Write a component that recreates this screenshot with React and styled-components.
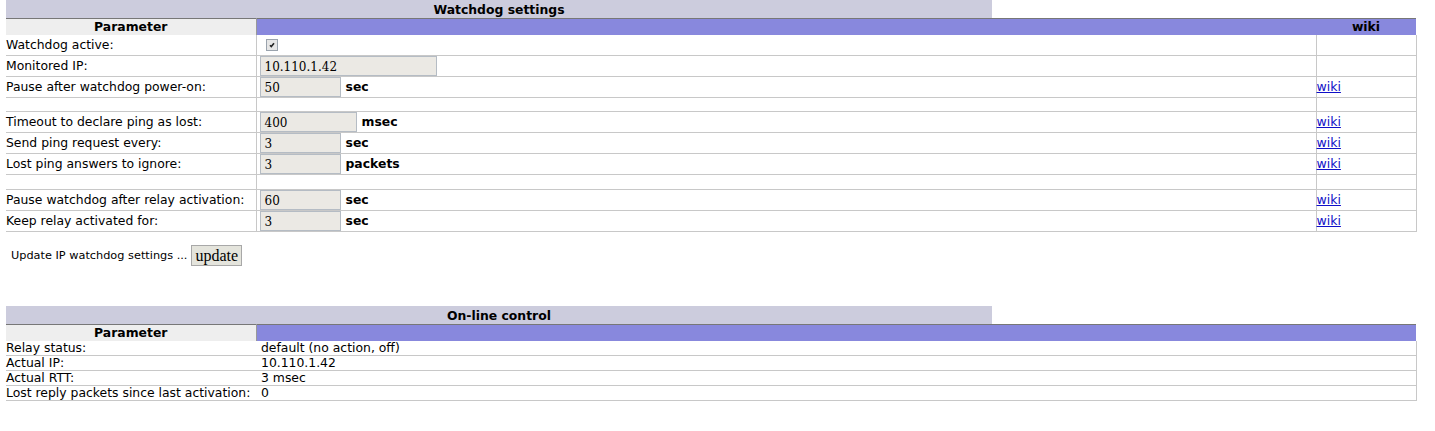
import React from 'react';
import styled, { createGlobalStyle } from 'styled-components';

const GlobalStyle = createGlobalStyle`
  body {
    margin: 0;
    padding: 0 6px;
    background: #fff;
    font-family: "DejaVu Sans", Verdana, sans-serif;
    font-size: 12.4px;
    line-height: 14px;
    color: #000;
  }
`;

const Section = styled.section`
  margin-top: ${p => p.top || 0}px;
`;

const Title = styled.div`
  width: 986px;
  height: 18px;
  line-height: 19px;
  background: #ccccdd;
  text-align: center;
  font-weight: bold;
`;

const Table = styled.table`
  width: 1410px;
  border-collapse: collapse;
  border-spacing: 0;
  border-top: 1px solid #777;
  table-layout: fixed;
`;

const HeadCell = styled.th`
  height: 15px;
  padding: 0;
  line-height: 16px;
  font-weight: bold;
  text-align: center;
  background: ${p => (p.light ? '#eeeeee' : '#8888dd')};
  border-right: ${p => (p.light ? '1px solid #999' : 'none')};
`;

const Row = styled.tr`
  border-bottom: 1px solid #c8c8c8;
`;

const Cell = styled.td`
  height: ${p => p.h}px;
  padding: 0 0 0 ${p => (p.pad == null ? 0 : p.pad)}px;
  vertical-align: middle;
  white-space: nowrap;
  border-right: ${p => (p.line ? '1px solid #c8c8c8' : 'none')};
`;

const Field = styled.div`
  display: flex;
  align-items: center;
  gap: 5px;
`;

const TextBox = styled.div`
  box-sizing: border-box;
  width: ${p => p.w}px;
  height: 20px;
  padding: 3px 0 0 4px;
  background: #ebe9e4;
  border: 1px solid #b5bcc4;
  font-family: "DejaVu Serif", "Liberation Serif", serif;
  font-size: 12px;
`;

const Unit = styled.span`
  font-weight: bold;
`;

const Check = styled.span`
  display: inline-block;
  box-sizing: border-box;
  width: 12px;
  height: 12px;
  margin-left: 6px;
  margin-top: 2px;
  background: #e6e6e6;
  border: 1px solid #9aa3ad;
  line-height: 0;
`;

const Wiki = styled.a`
  color: #1010c8;
  text-decoration: underline;
  font-size: 12.5px;
`;

const UpdateBar = styled.div`
  display: flex;
  align-items: center;
  gap: 4px;
  margin: 13px 0 0 5px;
  font-size: 11.3px;
`;

const Button = styled.button`
  height: 21px;
  padding: 0 3px;
  background: #e4e4dc;
  border: 1px solid #a8a8a8;
  font-family: "Liberation Serif", serif;
  font-size: 16px;
  color: #000;
`;

const settings = [
  { label: 'Watchdog active:', check: true },
  { label: 'Monitored IP:', value: '10.110.1.42', w: 177 },
  { label: 'Pause after watchdog power-on:', value: '50', w: 81, unit: 'sec', wiki: true },
  { spacer: 13 },
  { label: 'Timeout to declare ping as lost:', value: '400', w: 97, unit: 'msec', wiki: true },
  { label: 'Send ping request every:', value: '3', w: 81, unit: 'sec', wiki: true },
  { label: 'Lost ping answers to ignore:', value: '3', w: 81, unit: 'packets', wiki: true },
  { spacer: 14 },
  { label: 'Pause watchdog after relay activation:', value: '60', w: 81, unit: 'sec', wiki: true },
  { label: 'Keep relay activated for:', value: '3', w: 81, unit: 'sec', wiki: true },
];

const online = [
  ['Relay status:', 'default (no action, off)'],
  ['Actual IP:', '10.110.1.42'],
  ['Actual RTT:', '3 msec'],
  ['Lost reply packets since last activation:', '0'],
];

function CheckMark() {
  return (
    <Check>
      <svg width="10" height="10" viewBox="0 0 10 10">
        <path d="M3 5.2 L4.3 6.6 L7 3.2" fill="none" stroke="#222" strokeWidth="1.6" />
      </svg>
    </Check>
  );
}

function SettingsRow({ item }) {
  if (item.spacer) {
    return (
      <Row>
        <Cell h={item.spacer} line />
        <Cell h={item.spacer} line />
        <Cell h={item.spacer} line />
      </Row>
    );
  }
  return (
    <Row>
      <Cell h={20} pad={0} line>{item.label}</Cell>
      <Cell h={20} pad={3} line>
        {item.check ? (
          <CheckMark />
        ) : (
          <Field>
            <TextBox w={item.w}>{item.value}</TextBox>
            {item.unit && <Unit>{item.unit}</Unit>}
          </Field>
        )}
      </Cell>
      <Cell h={20} line>{item.wiki && <Wiki href="#">wiki</Wiki>}</Cell>
    </Row>
  );
}

export default function App() {
  return (
    <>
      <GlobalStyle />
      <Section>
        <Title>Watchdog settings</Title>
        <Table>
          <colgroup>
            <col style={{ width: 250 }} />
            <col style={{ width: 1060 }} />
            <col style={{ width: 100 }} />
          </colgroup>
          <thead>
            <tr>
              <HeadCell light>Parameter</HeadCell>
              <HeadCell />
              <HeadCell>wiki</HeadCell>
            </tr>
          </thead>
          <tbody>
            {settings.map((item, i) => (
              <SettingsRow key={i} item={item} />
            ))}
          </tbody>
        </Table>
        <UpdateBar>
          <span>Update IP watchdog settings ...</span>
          <Button>update</Button>
        </UpdateBar>
      </Section>

      <Section top={40}>
        <Title>On-line control</Title>
        <Table>
          <colgroup>
            <col style={{ width: 250 }} />
            <col style={{ width: 1160 }} />
          </colgroup>
          <thead>
            <tr>
              <HeadCell light>Parameter</HeadCell>
              <HeadCell />
            </tr>
          </thead>
          <tbody>
            {online.map(([label, value]) => (
              <Row key={label}>
                <Cell h={14}>{label}</Cell>
                <Cell h={14} pad={5} line>{value}</Cell>
              </Row>
            ))}
          </tbody>
        </Table>
      </Section>
    </>
  );
}
